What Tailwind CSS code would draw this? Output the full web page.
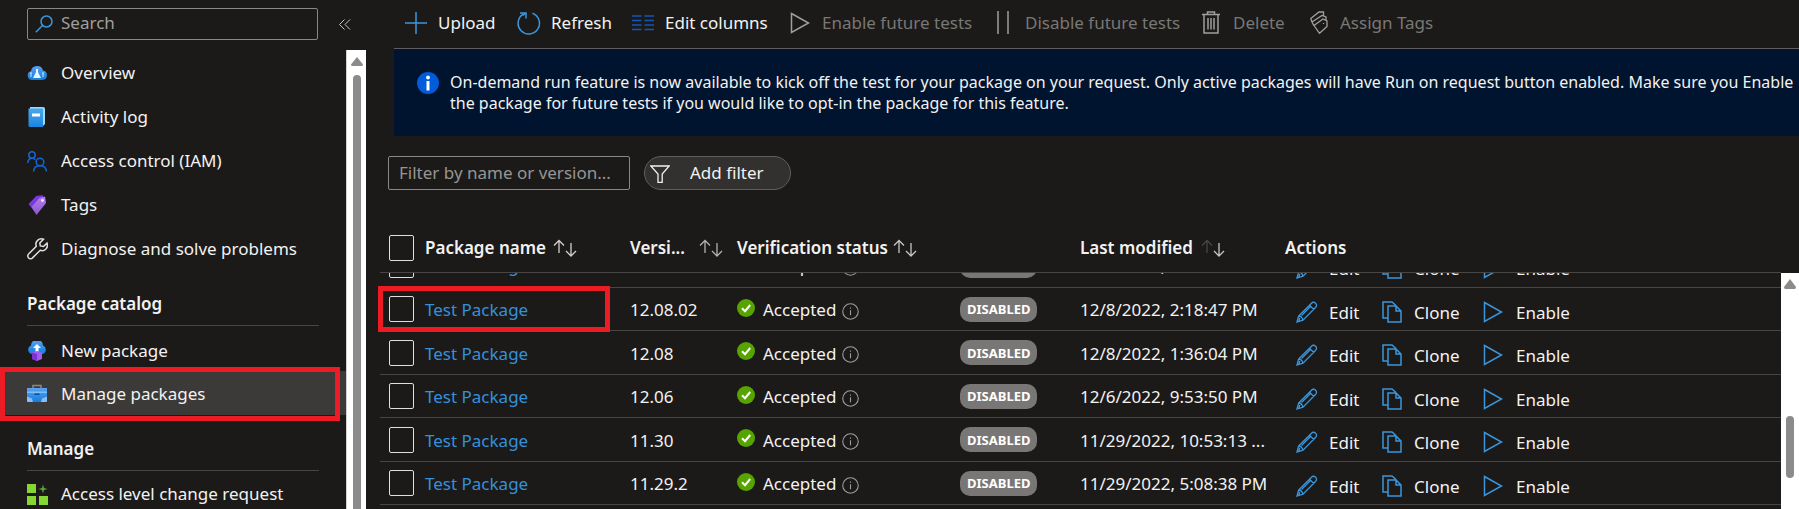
<!DOCTYPE html>
<html lang="en">
<head>
<meta charset="utf-8">
<title>Manage packages</title>
<script src="https://cdn.jsdelivr.net/npm/@tailwindcss/browser@4"></script>
</head>
<body class="bg-[#1b1a19] font-['Noto_Sans',sans-serif] text-[17px] leading-6 text-[#f3f2f1]">
<svg class="absolute h-0 w-0" aria-hidden="true">
  <defs>
    <linearGradient id="blue" x1="0" y1="0" x2="0" y2="1"><stop offset="0" stop-color="#5ea0ef"/><stop offset="1" stop-color="#0f7fe0"/></linearGradient>
    <linearGradient id="book" x1="0" y1="0" x2="0" y2="1"><stop offset="0" stop-color="#4aa8ec"/><stop offset="1" stop-color="#1a86e0"/></linearGradient>
    <linearGradient id="violet" x1="0" y1="0" x2="0" y2="1"><stop offset="0" stop-color="#b77af4"/><stop offset="1" stop-color="#8a5bc8"/></linearGradient>
  </defs>
  <symbol id="pencil" viewBox="0 0 22 22"><path d="M1 21l1.600-6L15.500 2.200a2.600 2.600 0 0 1 4 0 2.600 2.600 0 0 1 .2 4L7 19.200zM2.600 15c1.800 0 3.800 2 4.400 4.200M13.500 4.300l4.300 4.200M3.700 16.800l-.9 3.500M5.500 14.500l9-9"/></symbol>
  <symbol id="clone" viewBox="0 0 20 22"><path d="M6 17H1V1h9l4 3.500M6 5h8l5 5v11H6zM14 5v5h5"/></symbol>
  <symbol id="play" viewBox="0 0 20 22"><path d="M1.500 1.500L18.500 11 1.500 20.500z"/></symbol>
  <symbol id="info" viewBox="0 0 16 16"><circle cx="8" cy="8" r="7.300"/><path d="M8 6.800v4.700M8 4.300v1.200"/></symbol>
  <symbol id="sort" viewBox="0 0 24 18"><path d="M6 14V1.500M1 6.500l5-5 5 5"/><path d="M18 4v12.500M13 12l5 5 5-5"/></symbol>
  <symbol id="accepted" viewBox="0 0 18 18"><circle cx="9" cy="9" r="9" fill="#57a300"/><path d="M5 9.200l3 3 5.200-6.200" fill="none" stroke="#fff" stroke-width="2"/></symbol>
</svg>
<div class="flex h-screen overflow-hidden">

  <aside class="flex w-[366px] shrink-0 flex-col">
    <div class="flex shrink-0 items-center pt-2 pl-[27px]">
      <label class="flex h-8 w-[291px] items-center gap-2 rounded-xs border border-[#8a8886] pl-[7px]">
        <svg class="h-[18px] w-[18px] shrink-0 fill-none stroke-[#3a96dd]" stroke-width="1.500" viewBox="0 0 18 18"><circle cx="11.500" cy="6.500" r="5.500"/><path d="M7.500 10.500L.8 17.200"/></svg>
        <input type="search" aria-label="Search" placeholder="Search" class="w-full min-w-0 bg-transparent pb-0.5 outline-none placeholder:text-[#a19f9d]">
      </label>
      <button aria-label="Collapse menu" class="ml-5 p-px"><svg class="h-[11px] w-[12px] fill-none stroke-[#c8c6c4]" viewBox="0 0 12 11"><path d="M5.500.5l-5 5 5 5M11 .5l-5 5 5 5"/></svg></button>
    </div>
    <div class="mt-[10px] flex min-h-0 grow">
      <nav class="min-w-0 grow overflow-hidden pt-px">
        <a href="#" class="flex h-11 items-center gap-[14px] pl-[27px]">
          <svg class="h-5 w-5 shrink-0" viewBox="0 0 20 20"><path d="M5 17a4.600 4.600 0 0 1-1-9A6.200 6.200 0 0 1 16 7.500 4.800 4.800 0 0 1 15.500 17z" fill="url(#blue)"/><path d="M9 6h2v3l3 6H6l3-6z" fill="#e8f4ff"/><path d="M4 10v4M16 10v4M3 10h2M15 10h2" stroke="#cfe6ff"/></svg>
          Overview</a>
        <a href="#" class="flex h-11 items-center gap-[14px] pl-[27px]">
          <svg class="h-5 w-5 shrink-0" viewBox="0 0 20 20"><path d="M3 0h13a2 2 0 0 1 2 2v15l-2 2H3z" fill="#9bdcfb"/><path d="M1.500 1.500h14.500V20H3a1.500 1.500 0 0 1-1.500-1.500z" fill="url(#book)"/><path d="M5 6.500h8v3H5z" fill="#fff"/></svg>
          Activity log</a>
        <a href="#" class="flex h-11 items-center gap-[14px] pl-[27px]">
          <svg class="h-[21px] w-5 shrink-0 fill-none stroke-[#1266d8]" stroke-width="1.500" viewBox="0 0 20 21"><circle cx="5" cy="4" r="3.200"/><path d="M.8 12c.2-3 2-4.700 4.200-4.700 1.300 0 2.400.6 3.200 1.500"/><circle cx="13" cy="11" r="3.800"/><path d="M6.500 20.500c.3-3.500 3-5.700 6.500-5.700s6.200 2.200 6.500 5.700"/></svg>
          Access control (IAM)</a>
        <a href="#" class="flex h-11 items-center gap-[14px] pl-[27px]">
          <svg class="h-5 w-5 shrink-0" viewBox="0 0 20 20"><path d="M1.500 9L9.500.8 16 .2l1 6.500L8 17z" fill="#773adc"/><path d="M4.500 12l8-9L18 1.500l1 6.500L9.500 20z" fill="url(#violet)"/><circle cx="15.500" cy="5.500" r="1.400" fill="#f3e8ff"/></svg>
          Tags</a>
        <a href="#" class="flex h-11 items-center gap-[13px] pl-[27px]">
          <svg class="h-[22px] w-[21px] shrink-0 fill-none stroke-[#e1dfdd]" stroke-width="1.500" viewBox="0 0 21 22"><path d="M16.500 1.300a5.400 5.400 0 0 0-7.200 6.900L1.600 16a2.700 2.700 0 0 0 0 3.900 2.700 2.700 0 0 0 3.900 0l7.700-7.600a5.400 5.400 0 0 0 6.800-7.200l-3.500 3.400-3.200-.6-.5-3z"/></svg>
          Diagnose and solve problems</a>
        <h2 class="mr-[27px] ml-[27px] flex h-[55px] items-end border-b border-[#484644] pb-[9px] font-semibold">Package catalog</h2>
        <a href="#" class="flex h-[45px] items-center gap-[14px] pt-1 pl-[27px]">
          <svg class="h-5 w-5 shrink-0" viewBox="0 0 20 20"><path d="M4.500 13a4.500 4.500 0 0 1-.5-8.500 6 6 0 0 1 12 0A4.500 4.500 0 0 1 15.500 13z" fill="url(#blue)"/><path d="M10 3l4 4h-2.500v5h-3V7H6z" fill="#fff"/><path d="M5 11.500l5-1.500 5 1.500V18l-5 2-5-2z" fill="#a05cf0"/><path d="M10 13v7l-5-2v-6.500z" fill="#7a35d0"/></svg>
          New package</a>
        <a href="#" aria-current="page" class="relative flex h-11 items-center gap-[14px] bg-[#3b3a39] pt-0.5 pl-[27px]">
          <svg class="h-5 w-5 shrink-0" viewBox="0 0 20 20"><path d="M6 4V1.500h8V4" fill="none" stroke="#8a8886" stroke-width="1.500"/><path d="M0 4h20v13a1 1 0 0 1-1 1H1a1 1 0 0 1-1-1z" fill="url(#blue)"/><path d="M0 7.500h20v1.500H0z" fill="#7cc0f8"/><path d="M0 12.500l5 2 1 3.500H1a1 1 0 0 1-1-1zM20 12.500l-5 2-1 3.500h5a1 1 0 0 0 1-1z" fill="#8bbcf2"/><path d="M7.500 9.500h5V11h-5z" fill="#0a4f9e"/></svg>
          Manage packages
          <span class="absolute -top-1 left-0 h-[54px] w-[340px] border-[5px] border-[#ed1c24]"></span></a>
        <h2 class="mr-[27px] ml-[27px] flex h-[56px] items-end border-b border-[#484644] pb-[9px] font-semibold">Manage</h2>
        <a href="#" class="flex h-11 items-center gap-[13px] pt-0.5 pl-[27px]">
          <svg class="h-[21px] w-[21px] shrink-0 fill-[#86d633]" viewBox="0 0 21 21"><path d="M0 0h9v9H0zM0 12h9v9H0zM12 12h9v9h-9z"/><path d="M16 .5l1 3.500 3.500 1-3.500 1-1 3.500-1-3.500-3.500-1 3.500-1z" fill="#5ea33a"/></svg>
          Access level change request</a>
      </nav>
      <div class="flex w-5 shrink-0 flex-col items-center border-l border-[#d2d0ce] bg-white pt-[7px]">
        <svg class="h-[9px] w-[12px] shrink-0 fill-[#8b8b8b]" viewBox="0 0 12 9"><path d="M6 0l6 7.500q0 1.500-1.500 1.500h-9Q0 9 0 7.500z"/></svg>
        <div class="mt-[9px] w-2 grow rounded-t-full bg-[#8b8b8b]"></div>
      </div>
    </div>
  </aside>

  <main class="flex min-w-0 grow flex-col">
    <div class="flex h-12 shrink-0 items-center pb-[3px] pl-[39px] whitespace-nowrap">
      <button class="flex w-[112px] items-center gap-[11px]"><svg class="h-[22px] w-[22px] shrink-0 fill-none stroke-[#3a96dd]" stroke-width="1.500" viewBox="0 0 22 22"><path d="M11 0v22M0 11h22"/></svg>Upload</button>
      <button class="flex w-[115px] items-center gap-[10px]"><svg class="h-[24px] w-[24px] shrink-0 fill-none stroke-[#3a96dd]" stroke-width="1.500" viewBox="0 0 24 24"><path d="M15.500 2.300A10.700 10.700 0 1 1 6.200 3.200M3 2h6v5.500M8.500 2L6 4.500"/></svg>Refresh</button>
      <button class="flex w-[158px] items-center gap-[11px]"><svg class="h-[16px] w-[22px] shrink-0 fill-none stroke-[#1557b5]" stroke-width="1.500" viewBox="0 0 22 16"><path d="M0 1h9.500M12.500 1H22M0 5.500h9.500M12.500 5.500H22M0 10h9.500M12.500 10H22M0 14.500h9.500M12.500 14.500H22"/></svg>Edit columns</button>
      <button disabled class="flex w-[207px] items-center gap-3 text-[#797775]"><svg class="h-[22px] w-5 shrink-0 fill-none stroke-[#a19f9d]" stroke-width="1.500"><use href="#play"/></svg>Enable future tests</button>
      <button disabled class="flex w-[205px] items-center gap-4 text-[#797775]"><svg class="h-[23px] w-[12px] shrink-0 fill-none stroke-[#a19f9d]" stroke-width="1.500" viewBox="0 0 12 23"><path d="M1 0v23M11 0v23"/></svg>Disable future tests</button>
      <button disabled class="flex w-[108px] items-center gap-[13px] text-[#797775]"><svg class="h-[23px] w-[18px] shrink-0 fill-none stroke-[#a19f9d]" stroke-width="1.500" viewBox="0 0 18 23"><path d="M0 3.500h18M5.500 3.500V1h7v2.500M2 3.500V22h14V3.500M6 7v11.500M9 7v11.500M12 7v11.500"/></svg>Delete</button>
      <button disabled class="flex items-center gap-3 text-[#797775]"><svg class="h-[23px] w-[18px] shrink-0 fill-none stroke-[#a19f9d]" stroke-width="1.300" viewBox="0 0 18 23"><path d="M4 14.500L13 8l4 2v5.500L9.500 22.300zM3.800 14.500L2 11l10-6.500 4 1.500v3M2 11L.8 7.500 9 1h4.500v3.500M13.500 12v1"/></svg>Assign Tags</button>
    </div>

    <div class="ml-7 flex h-[88px] shrink-0 gap-[11px] border-t border-[#605e5c] bg-[#00142f] pt-[23px] pl-[23px] text-[16px] leading-[21px]">
      <svg class="h-[22px] w-[22px] shrink-0" viewBox="0 0 22 22"><circle cx="11" cy="11" r="11" fill="#015cda"/><circle cx="11" cy="5.500" r="1.900" fill="#fff"/><path d="M9.500 9h3v9.500h-3z" fill="#fff"/></svg>
      <p>On-demand run feature is now available to kick off the test for your package on your request. Only active packages will have Run on request button enabled. Make sure you Enable the package for future tests if you would like to opt-in the package for this feature.</p>
    </div>

    <div class="mt-5 flex shrink-0 items-center gap-[14px] pl-[22px]">
      <input type="text" aria-label="Filter by name or version" placeholder="Filter by name or version..." class="h-[34px] w-[242px] rounded-xs border border-[#8a8886] bg-transparent px-[10px] pb-0.5 outline-none placeholder:text-[#979593]">
      <button class="flex h-[34px] w-[147px] items-center gap-5 rounded-full border border-[#605e5c] bg-[#323130] pl-[5px]"><svg class="mt-0.5 h-[18px] w-5 shrink-0 fill-none stroke-[#f3f2f1]" stroke-width="1.300" viewBox="0 0 20 18"><path d="M.8 1h18.400l-7 8v8.300H8V9z"/></svg>Add filter</button>
    </div>

    <table class="mt-[34px] ml-[14px] w-[calc(100%-32px)] shrink-0 table-fixed border-b border-[#484644] text-left">
      <colgroup><col class="w-[45px]"><col class="w-[205px]"><col class="w-[107px]"><col class="w-[223px]"><col class="w-[120px]"><col class="w-[205px]"><col></colgroup>
      <thead><tr class="h-12 whitespace-nowrap">
        <th class="pl-[9px]"><input type="checkbox" aria-label="Select all packages" class="block h-[26px] w-[25px] appearance-none rounded-xs border border-[#e1dfdd]"></th>
        <th class="font-semibold"><span class="flex items-center gap-[7px] pt-px">Package name <svg class="h-[18px] w-6 fill-none stroke-[#d2d0ce]" stroke-width="1.300"><use href="#sort"/></svg></span></th>
        <th class="font-semibold"><span class="flex items-center justify-between pt-px pr-[14px]">Versi... <svg class="h-[18px] w-6 fill-none stroke-[#b3b0ad]" stroke-width="1.300"><use href="#sort"/></svg></span></th>
        <th class="font-semibold"><span class="flex items-center gap-[5px] pt-px">Verification status <svg class="h-[18px] w-6 shrink-0 fill-none stroke-[#c8c6c4]" stroke-width="1.300"><use href="#sort"/></svg></span></th>
        <td></td>
        <th class="font-semibold"><span class="flex items-center gap-2 pt-px">Last modified <svg class="h-[18px] w-6 fill-none stroke-[#c8c6c4]" stroke-width="1.300" viewBox="0 0 24 18"><path class="stroke-[#484644]" d="M6 14V1.500M1 6.500l5-5 5 5"/><path d="M18 4v12.500M13 12l5 5 5-5"/></svg></span></th>
        <th class="pt-px font-semibold">Actions</th>
      </tr></thead>
    </table>

    <div class="flex min-h-0 grow overflow-hidden pl-[11px]">
      <div class="min-w-0 grow overflow-hidden pl-[3px]">
        <table class="-mt-[29px] w-full table-fixed">
          <colgroup><col class="w-[45px]"><col class="w-[205px]"><col class="w-[107px]"><col class="w-[223px]"><col class="w-[120px]"><col class="w-[205px]"><col></colgroup>
          <tbody id="packages"></tbody>
        </table>
      </div>
      <div class="flex w-[18px] shrink-0 flex-col items-center bg-white pt-[6px]">
        <svg class="h-[10px] w-[12px] shrink-0 fill-[#8b8b8b]" viewBox="0 0 12 10"><path d="M6 0l6 8q0 2-1.500 2h-9Q0 10 0 8z"/></svg>
        <div class="mt-[127px] h-[62px] w-2 shrink-0 rounded-full bg-[#8b8b8b]"></div>
      </div>
    </div>
  </main>
</div>
<script>
const packages = [
  ['12.08.03', '12/9/2022, 9:12:27 AM'],
  ['12.08.02', '12/8/2022, 2:18:47 PM'],
  ['12.08', '12/8/2022, 1:36:04 PM'],
  ['12.06', '12/6/2022, 9:53:50 PM'],
  ['11.30', '11/29/2022, 10:53:13 ...'],
  ['11.29.2', '11/29/2022, 5:08:38 PM'],
];
const highlighted = '<span class="absolute -top-[2px] -left-[2px] h-[46px] w-[232px] border-[5px] border-[#ed1c24]"></span>';
document.getElementById('packages').innerHTML = packages.map(([version, modified], i) => `
  <tr class="relative h-11 border-b border-[#484644] whitespace-nowrap even:h-[43px]">
    <td class="pl-[9px]">${i === 1 ? highlighted : ''}<input type="checkbox" aria-label="Select Test Package ${version}" class="block h-[26px] w-[25px] appearance-none rounded-xs border border-[#e1dfdd]"></td>
    <td class="pt-0.5"><a href="#" class="text-[#3590dc]">Test Package</a></td>
    <td class="pt-0.5">${version}</td>
    <td class="pt-0.5"><span class="flex items-center"><svg class="mb-[5px] h-[18px] w-[18px] shrink-0"><use href="#accepted"/></svg><span class="pl-2">Accepted</span><svg class="ml-[6px] mt-0.5 h-[17px] w-[17px] shrink-0 fill-none stroke-[#a19f9d]"><use href="#info"/></svg></span></td>
    <td><span class="inline-flex h-[25px] items-center rounded-[10px] bg-[#797775] px-[7px] text-[13px] font-bold text-white">DISABLED</span></td>
    <td class="pt-0.5">${modified}</td>
    <td><span class="flex items-center pt-[7px] pl-[11px]">
      <button class="flex w-[86px] items-center gap-[11px]"><svg class="mb-0.5 h-[22px] w-[22px] shrink-0 fill-none stroke-[#3a96dd]" stroke-width="1.300"><use href="#pencil"/></svg>Edit</button>
      <button class="flex w-[101px] items-center gap-3"><svg class="mb-0.5 h-[22px] w-5 shrink-0 fill-none stroke-[#3a96dd]" stroke-width="1.500"><use href="#clone"/></svg>Clone</button>
      <button class="flex items-center gap-[13px]"><svg class="mb-0.5 h-[22px] w-5 shrink-0 fill-none stroke-[#3a96dd]" stroke-width="1.500"><use href="#play"/></svg>Enable</button>
    </span></td>
  </tr>`).join('');
</script>
</body>
</html>
